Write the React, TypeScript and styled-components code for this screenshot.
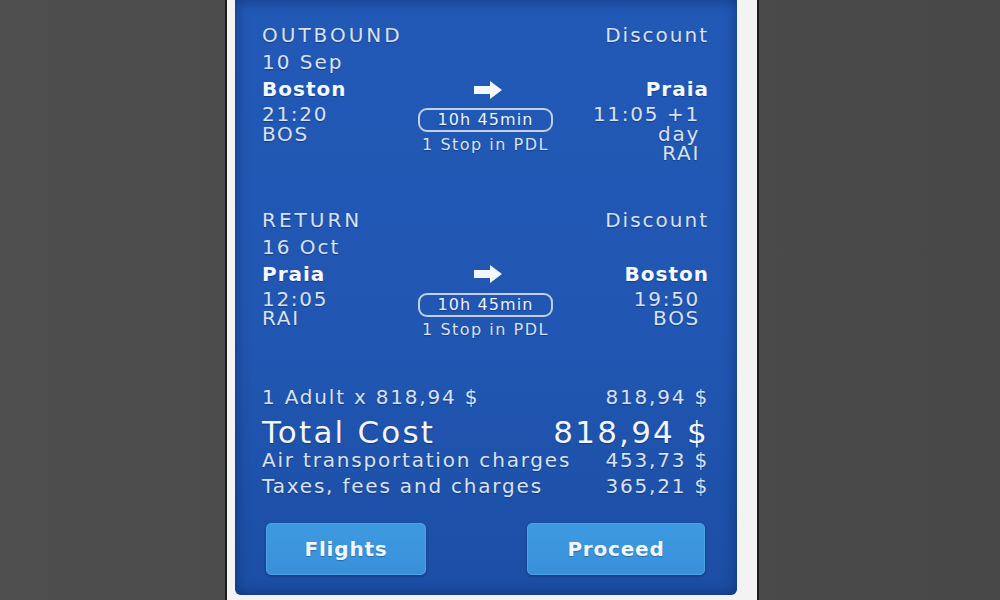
import React from "react";
import styled, { createGlobalStyle } from "styled-components";

const Global = createGlobalStyle`
  html, body { margin: 0; padding: 0; background: #4a4a4a; }
  body { font-family: "DejaVu Sans", "Liberation Sans", sans-serif; }
`;

const Page = styled.div`
  display: flex;
  height: 600px;
  padding-left: 225px;
  background: linear-gradient(90deg, #4e4e4e 0%, #484848 100%);
  overflow: hidden;
`;

const Frame = styled.div`
  display: flex;
  align-items: flex-start;
  width: 502px;
  height: 600px;
  padding: 0 20px 0 8px;
  background: #f3f3f3;
  border-left: 2px solid #1c1c1c;
  border-right: 2px solid #1c1c1c;
`;

const Panel = styled.div`
  width: 502px;
  height: 599px;
  box-sizing: border-box;
  padding: 22px 28px 0 27px;
  border-radius: 0 0 6px 6px;
  border-top: 4px solid #2f6ac4;
  background: linear-gradient(180deg, #2259b6 0%, #2157b3 55%, #1c4ea4 100%);
  box-shadow: inset 0 0 14px rgba(5, 25, 80, 0.55);
  color: #dae2f1;
  text-shadow: 0 1px 1px rgba(0, 10, 50, 0.35);
  display: flex;
  flex-direction: column;
  margin-top: -4px;
`;

const Section = styled.section<{ $gap: number }>`
  margin-bottom: ${(p) => p.$gap}px;
`;

const HeaderRow = styled.div`
  display: flex;
  justify-content: space-between;
  font-size: 20px;
  line-height: 27px;
`;

const Title = styled.span`
  letter-spacing: 3px;
`;

const Plain = styled.span`
  letter-spacing: 2px;
`;

const DateLine = styled.div`
  font-size: 20px;
  line-height: 27px;
  letter-spacing: 2px;
`;

const Route = styled.div`
  display: grid;
  grid-template-columns: 1fr auto 1fr;
`;

const Col = styled.div<{ $align: "left" | "center" | "right" }>`
  display: flex;
  flex-direction: column;
  align-items: ${(p) =>
    p.$align === "left" ? "flex-start" : p.$align === "right" ? "flex-end" : "center"};
  text-align: ${(p) => p.$align};
`;

const City = styled.div`
  font-size: 20px;
  line-height: 27px;
  font-weight: bold;
  letter-spacing: 1px;
  color: #f5f8fd;
`;

const Times = styled.div<{ $right?: boolean }>`
  margin-top: 2px;
  padding-right: ${(p) => (p.$right ? 9 : 0)}px;
  font-size: 20px;
  line-height: 19.5px;
  letter-spacing: 1.7px;
`;

const ArrowBox = styled.div`
  height: 27px;
  display: flex;
  align-items: center;
  padding-left: 4px;
`;

const Pill = styled.div`
  margin-top: 5px;
  padding: 0 17px;
  border: 2px solid #c3cfe4;
  border-radius: 9px;
  font-size: 16px;
  line-height: 20px;
  letter-spacing: 1.1px;
  color: #eef3fb;
`;

const Stops = styled.div`
  margin-top: 3px;
  font-size: 16px;
  line-height: 20px;
  letter-spacing: 1.5px;
`;

const PriceRow = styled.div<{ $big?: boolean; $lh: number }>`
  display: flex;
  justify-content: space-between;
  font-size: ${(p) => (p.$big ? 31 : 20)}px;
  line-height: ${(p) => p.$lh}px;
  letter-spacing: ${(p) => (p.$big ? 2.2 : 1.8)}px;
  color: ${(p) => (p.$big ? "#f2f6fc" : "#dae2f1")};
`;

const Prices = styled.div`
  display: flex;
  flex-direction: column;
`;

const SubPrices = styled.div`
  display: flex;
  flex-direction: column;
`;

const Buttons = styled.div`
  display: flex;
  justify-content: space-between;
  margin-top: 24px;
  padding: 0 4px 0 4px;
`;

const Button = styled.button<{ $w: number }>`
  width: ${(p) => p.$w}px;
  height: 52px;
  border: 1px solid #4ea3e6;
  border-radius: 5px;
  background: linear-gradient(180deg, #3e9ae0 0%, #3990d9 100%);
  box-shadow: 0 1px 3px rgba(0, 20, 60, 0.4);
  color: #f2f6fb;
  font-family: "DejaVu Sans", "Liberation Sans", sans-serif;
  font-weight: bold;
  font-size: 20px;
  letter-spacing: 0.8px;
  text-shadow: 0 1px 1px rgba(0, 20, 60, 0.3);
  padding: 0;
`;

const Arrow = () => (
  <svg width="28" height="18" viewBox="0 0 28 18">
    <path d="M0 5 H16 V0 L28 9 L16 18 V13 H0 Z" fill="#f4f7fc" />
  </svg>
);

type Leg = {
  title: string;
  date: string;
  from: string;
  to: string;
  left: string[];
  right: string[];
  gap: number;
};

const legs: Leg[] = [
  {
    title: "OUTBOUND",
    date: "10 Sep",
    from: "Boston",
    to: "Praia",
    left: ["21:20", "BOS"],
    right: ["11:05 +1", "day", "RAI"],
    gap: 43,
  },
  {
    title: "RETURN",
    date: "16 Oct",
    from: "Praia",
    to: "Boston",
    left: ["12:05", "RAI"],
    right: ["19:50", "BOS"],
    gap: 37,
  },
];

export default function App() {
  return (
    <>
      <Global />
      <Page>
        <Frame>
          <Panel>
            {legs.map((leg) => (
              <Section key={leg.title} $gap={leg.gap}>
                <HeaderRow>
                  <Title>{leg.title}</Title>
                  <Plain>Discount</Plain>
                </HeaderRow>
                <DateLine>{leg.date}</DateLine>
                <Route>
                  <Col $align="left">
                    <City>{leg.from}</City>
                    <Times>
                      {leg.left.map((l) => (
                        <div key={l}>{l}</div>
                      ))}
                    </Times>
                  </Col>
                  <Col $align="center">
                    <ArrowBox>
                      <Arrow />
                    </ArrowBox>
                    <Pill>10h 45min</Pill>
                    <Stops>1 Stop in PDL</Stops>
                  </Col>
                  <Col $align="right">
                    <City>{leg.to}</City>
                    <Times $right>
                      {leg.right.map((l) => (
                        <div key={l}>{l}</div>
                      ))}
                    </Times>
                  </Col>
                </Route>
              </Section>
            ))}
            <Prices>
              <PriceRow $lh={40}>
                <span>1 Adult x 818,94 $</span>
                <span>818,94 $</span>
              </PriceRow>
              <PriceRow $big $lh={30}>
                <span>Total Cost</span>
                <span>818,94 $</span>
              </PriceRow>
              <SubPrices>
                <PriceRow $lh={26}>
                  <span>Air transportation charges</span>
                  <span>453,73 $</span>
                </PriceRow>
                <PriceRow $lh={26}>
                  <span>Taxes, fees and charges</span>
                  <span>365,21 $</span>
                </PriceRow>
              </SubPrices>
            </Prices>
            <Buttons>
              <Button $w={160}>Flights</Button>
              <Button $w={178}>Proceed</Button>
            </Buttons>
          </Panel>
        </Frame>
      </Page>
    </>
  );
}
